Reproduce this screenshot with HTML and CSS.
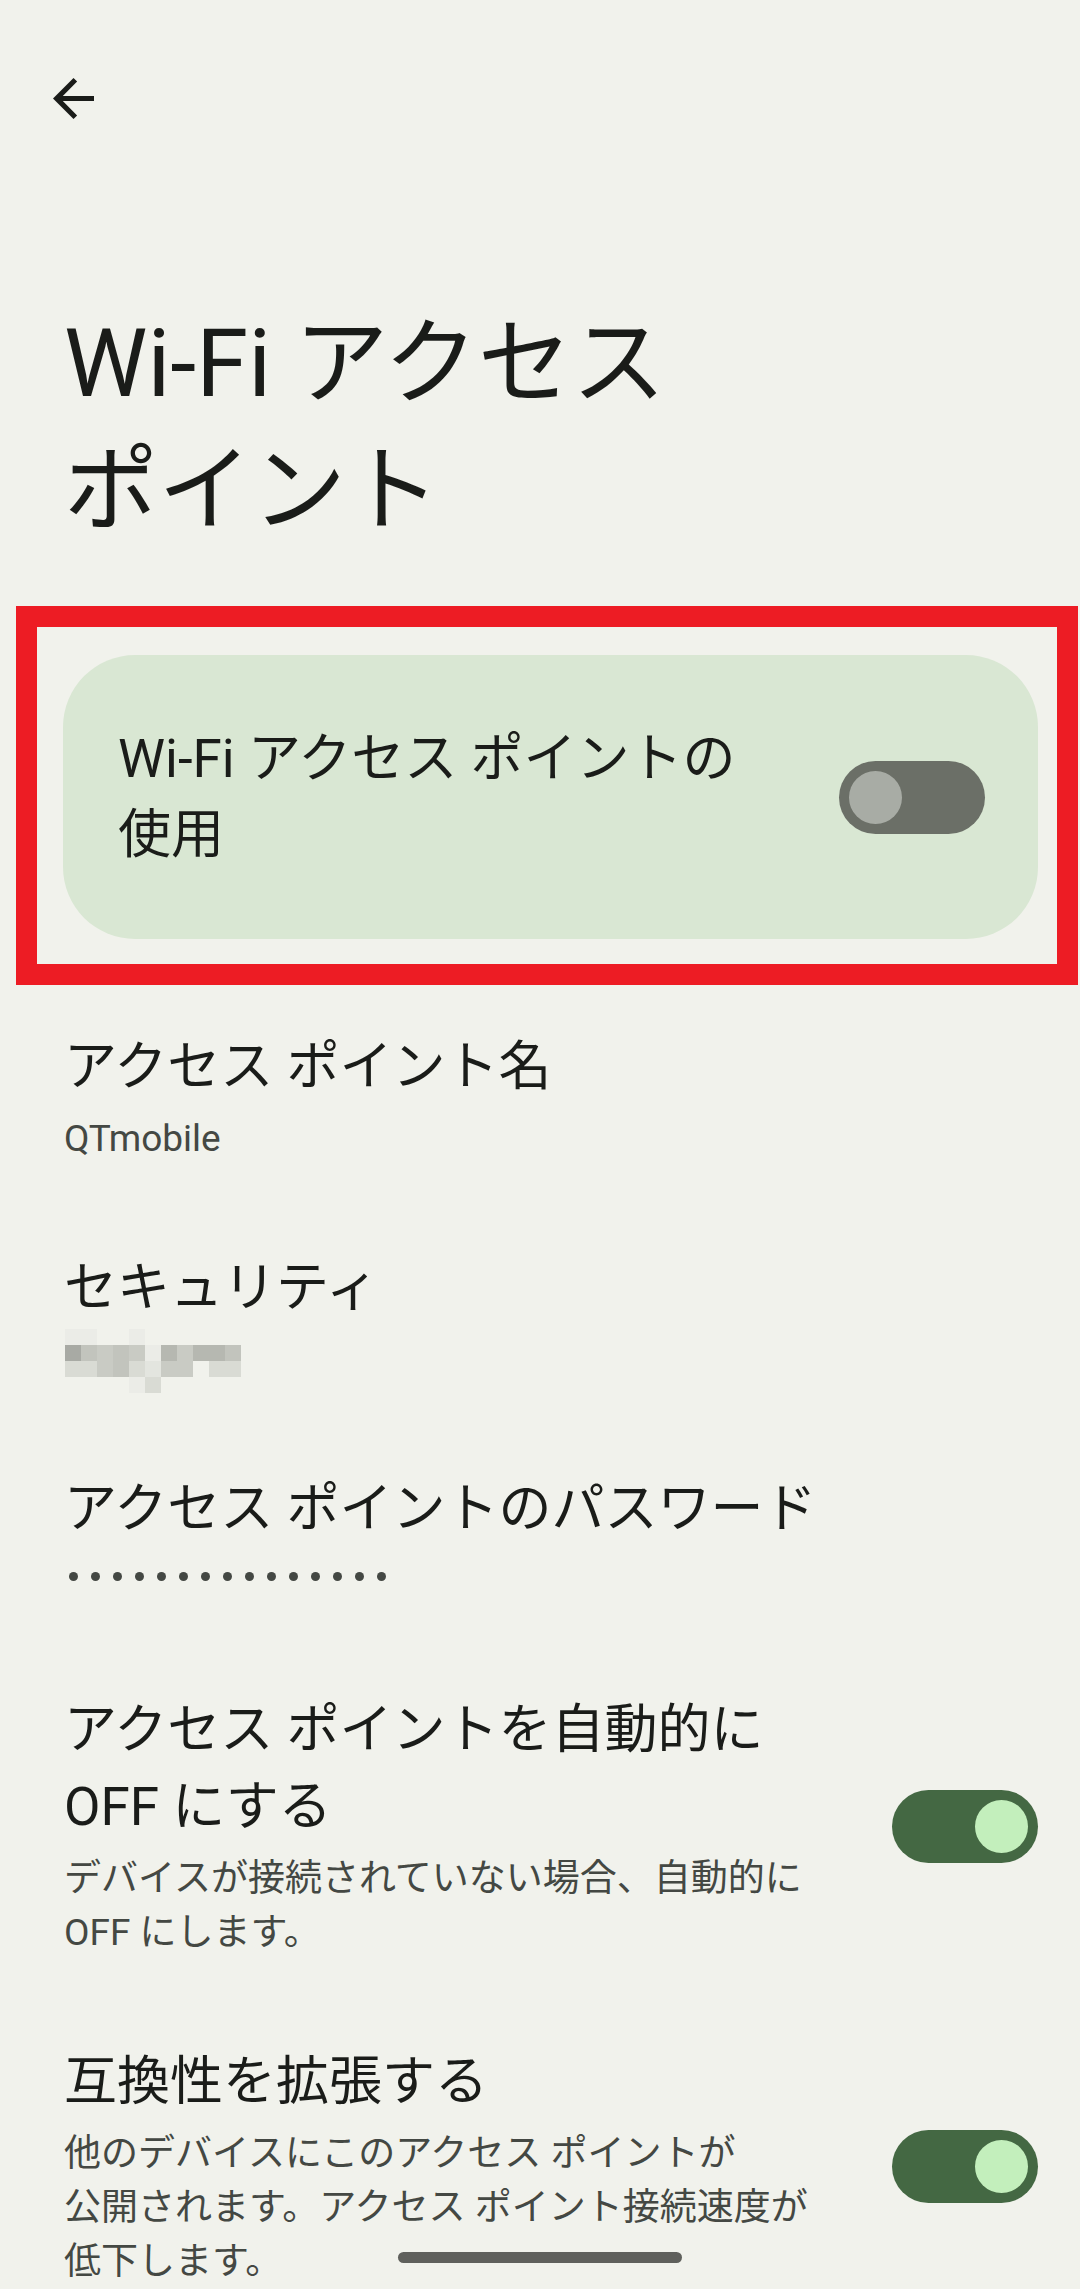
FILE: index.html
```html
<!DOCTYPE html>
<html lang="ja">
<head>
  <meta charset="UTF-8" />
  <meta name="viewport" content="width=device-width, initial-scale=1" />
  <title>Wi-Fi アクセス ポイント</title>
  <link rel="stylesheet" href="styles.css">
</head>
<body>

  <div class="screen">

    <header class="topbar">
      <button class="back" aria-label="戻る">
        <svg width="41" height="41" viewBox="4 4 16 16">
          <path d="M20 11H7.83l5.59-5.59L12 4l-8 8 8 8 1.41-1.41L7.83 13H20v-2z" />
        </svg>
      </button>
    </header>

    <h1 class="page-title">Wi-Fi アクセス<br>ポイント</h1>

    <!-- red annotation box around the main switch -->
    <div class="highlight">
      <div class="main-switch">
        <span class="main-switch-label">Wi-Fi アクセス ポイントの<br>使用</span>
        <span class="switch switch-off"><span class="thumb"></span></span>
      </div>
    </div>

    <ul class="prefs">
      <li class="pref">
        <div class="pref-text">
          <div class="pref-title">アクセス ポイント名</div>
          <div class="pref-summary">QTmobile</div>
        </div>
      </li>

      <li class="pref">
        <div class="pref-text">
          <div class="pref-title">セキュリティ</div>
          <div class="pixelated">
            <span class="s7"></span><span class="s7"></span><span></span><span></span><span class="s7"></span><span></span><span></span><span></span><span></span><span></span><span></span>
            <span class="s1"></span><span class="s3"></span><span class="s4"></span><span class="s3"></span><span class="s4"></span><span class="s7"></span><span class="s2"></span><span class="s4"></span><span class="s2"></span><span class="s2"></span><span class="s3"></span>
            <span class="s5"></span><span class="s5"></span><span class="s4"></span><span class="s3"></span><span class="s5"></span><span class="s6"></span><span class="s4"></span><span class="s4"></span><span></span><span class="s5"></span><span class="s5"></span>
            <span></span><span></span><span></span><span></span><span class="s7"></span><span class="s5"></span><span></span><span></span><span></span><span></span><span></span>
          </div>
        </div>
      </li>

      <li class="pref">
        <div class="pref-text">
          <div class="pref-title">アクセス ポイントのパスワード</div>
          <div class="dots">
            <span></span><span></span><span></span><span></span><span></span>
            <span></span><span></span><span></span><span></span><span></span>
            <span></span><span></span><span></span><span></span><span></span>
          </div>
        </div>
      </li>

      <li class="pref">
        <div class="pref-text">
          <div class="pref-title">アクセス ポイントを自動的に<br>OFF にする</div>
          <div class="pref-summary">デバイスが接続されていない場合、自動的に<br>OFF にします。</div>
        </div>
        <span class="switch switch-on"><span class="thumb"></span></span>
      </li>

      <li class="pref">
        <div class="pref-text">
          <div class="pref-title">互換性を拡張する</div>
          <div class="pref-summary">他のデバイスにこのアクセス ポイントが<br>公開されます。アクセス ポイント接続速度が<br>低下します。</div>
        </div>
        <span class="switch switch-on"><span class="thumb"></span></span>
      </li>
    </ul>

    <div class="gesture-bar"></div>
  </div>

</body>
</html>
```

FILE: styles.css
```css
body {
  margin: 0;
  background: #f1f2ec;
  font-family: "Roboto", "Noto Sans CJK JP", sans-serif;
  color: #1a1c19;
}

.screen {
  position: relative;
  width: 1080px;
  height: 2289px;
  overflow: hidden;
}

.topbar {
  height: 197px;
  display: flex;
  align-items: center;
  padding-left: 53px;
}

.back {
  display: flex;
  padding: 0;
  border: none;
  background: none;
  cursor: pointer;
}

.back svg {
  fill: #1a1c19;
}

.page-title {
  margin: 104px 0 0;
  padding: 0 64px;
  font-size: 94px;
  font-weight: 400;
  line-height: 127px;
}

.highlight {
  box-sizing: border-box;
  width: 1062px;
  margin: 51px 0 0 16px;
  border: 21px solid #ed1c24;
  padding: 28px 19px 25px 26px;
}

.main-switch {
  box-sizing: border-box;
  height: 284px;
  display: flex;
  align-items: center;
  justify-content: space-between;
  padding: 0 53px 0 55px;
  border-radius: 72px;
  background: #d9e7d3;
}

.main-switch-label {
  font-size: 53px;
  line-height: 76px;
}

/* switches */
.switch {
  box-sizing: border-box;
  flex: none;
  width: 146px;
  height: 73px;
  display: flex;
  align-items: center;
  padding: 0 10px;
  border-radius: 37px;
}

.switch .thumb {
  width: 53px;
  height: 53px;
  border-radius: 50%;
}

.switch-off {
  background: #6b6f67;
}

.switch-off .thumb {
  background: #a8aca5;
}

.switch-on {
  justify-content: flex-end;
  background: #446843;
}

.switch-on .thumb {
  background: #c3efbc;
}

/* preference list */
.prefs {
  list-style: none;
  margin: 2px 0 0;
  padding: 0 42px 0 64px;
}

.pref {
  display: flex;
  align-items: center;
  gap: 50px;
  padding: 42px 0;
}

.pref-text {
  flex: 1;
  min-width: 0;
}

.pref-title {
  font-size: 53px;
  line-height: 77px;
}

.pref-summary {
  margin-top: 6px;
  font-size: 37px;
  line-height: 54px;
  color: #444843;
}

.pixelated {
  display: grid;
  grid-template-columns: repeat(11, 16px);
  grid-auto-rows: 16px;
  margin: 2px 0 -6px 1px;
}

.s1 { background: #a8aaa4; }
.s2 { background: #b6b8b1; }
.s3 { background: #c2c4bd; }
.s4 { background: #c9cbc4; }
.s5 { background: #d9dbd4; }
.s6 { background: #e3e5df; }
.s7 { background: #ebece7; }

.dots {
  box-sizing: border-box;
  height: 54px;
  margin-top: 6px;
  display: flex;
  align-items: center;
  gap: 13px;
  padding: 0 0 10px 5px;
}

.dots span {
  width: 9px;
  height: 9px;
  border-radius: 50%;
  background: #444843;
}

.gesture-bar {
  position: absolute;
  left: 398px;
  top: 2252px;
  width: 284px;
  height: 11px;
  border-radius: 6px;
  background: #5f605c;
}
```
